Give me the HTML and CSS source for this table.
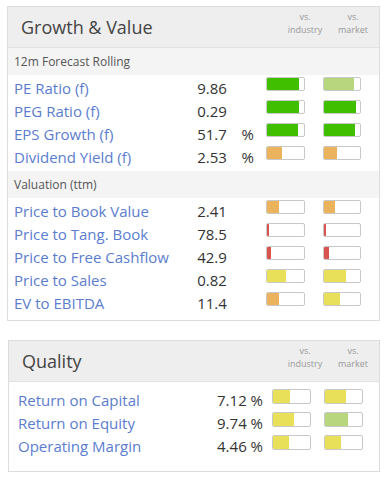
FILE: index.html
```html
<!DOCTYPE html>
<html>
<head>
<meta charset="utf-8">
<link rel="stylesheet" href="styles.css">
</head>
<body>
<div class="panel gv">
  <div class="phead">
    <div class="ptitle">Growth &amp; Value</div>
    <div class="vs">vs.<br>industry</div>
    <div class="vs">vs.<br>market</div>
  </div>
  <div class="sub">12m Forecast Rolling</div>
  <div class="rows">
    <div class="row"><span class="lbl">PE Ratio (f)</span><span class="val">9.86</span><span class="pct"></span><span class="bar"><i class="g" style="width:32px"></i></span><span class="bar"><i class="lg" style="width:30px"></i></span></div>
    <div class="row"><span class="lbl">PEG Ratio (f)</span><span class="val">0.29</span><span class="pct"></span><span class="bar"><i class="g" style="width:32px"></i></span><span class="bar"><i class="g" style="width:32px"></i></span></div>
    <div class="row"><span class="lbl">EPS Growth (f)</span><span class="val">51.7</span><span class="pct">%</span><span class="bar"><i class="g" style="width:31px"></i></span><span class="bar"><i class="g" style="width:31px"></i></span></div>
    <div class="row"><span class="lbl">Dividend Yield (f)</span><span class="val">2.53</span><span class="pct">%</span><span class="bar"><i class="o" style="width:15px"></i></span><span class="bar"><i class="o" style="width:13px"></i></span></div>
  </div>
  <div class="sub">Valuation (ttm)</div>
  <div class="rows last">
    <div class="row"><span class="lbl">Price to Book Value</span><span class="val">2.41</span><span class="pct"></span><span class="bar"><i class="o" style="width:12px"></i></span><span class="bar"><i class="o" style="width:11px"></i></span></div>
    <div class="row"><span class="lbl">Price to Tang. Book</span><span class="val">78.5</span><span class="pct"></span><span class="bar"><i class="r" style="width:2px"></i></span><span class="bar"><i class="r" style="width:2px"></i></span></div>
    <div class="row"><span class="lbl">Price to Free Cashflow</span><span class="val">42.9</span><span class="pct"></span><span class="bar"><i class="r" style="width:4px"></i></span><span class="bar"><i class="r" style="width:5px"></i></span></div>
    <div class="row"><span class="lbl">Price to Sales</span><span class="val">0.82</span><span class="pct"></span><span class="bar"><i class="y" style="width:19px"></i></span><span class="bar"><i class="y" style="width:22px"></i></span></div>
    <div class="row"><span class="lbl">EV to EBITDA</span><span class="val">11.4</span><span class="pct"></span><span class="bar"><i class="o" style="width:12px"></i></span><span class="bar"><i class="y" style="width:16px"></i></span></div>
  </div>
</div>

<div class="panel q">
  <div class="phead">
    <div class="ptitle">Quality</div>
    <div class="vs">vs.<br>industry</div>
    <div class="vs">vs.<br>market</div>
  </div>
  <div class="qrows">
    <div class="qrow"><span class="lbl">Return on Capital</span><span class="qval">7.12 %</span><span class="bar"><i class="y" style="width:17px"></i></span><span class="bar"><i class="y" style="width:21px"></i></span></div>
    <div class="qrow"><span class="lbl">Return on Equity</span><span class="qval">9.74 %</span><span class="bar"><i class="y" style="width:21px"></i></span><span class="bar"><i class="lg" style="width:23px"></i></span></div>
    <div class="qrow"><span class="lbl">Operating Margin</span><span class="qval">4.46 %</span><span class="bar"><i class="y" style="width:16px"></i></span><span class="bar"><i class="y" style="width:16px"></i></span></div>
  </div>
</div>
</body>
</html>
```

FILE: styles.css
```css
html, body {
  margin: 0;
  padding: 0;
  background: #fff;
}
body {
  padding: 6px 0 0 7px;
  font-family: "Open Sans", "DejaVu Sans", sans-serif;
  color: #333;
}
.panel {
  width: 371px;
  border: 1px solid #dddddd;
  background: #fff;
}
.panel.q {
  margin-top: 19px;
  margin-left: 1px;
  width: 370px;
}
.phead {
  display: flex;
  align-items: center;
  height: 40px;
  background: #eeeeee;
  border-bottom: 1px solid #e2e2e2;
  padding-right: 3px;
}
.ptitle {
  flex: 1;
  font-size: 18px;
  color: #444;
  padding-left: 13px;
  line-height: 24px;
}
.q .ptitle {
  padding-left: 13px;
}
.vs {
  align-self: flex-start;
  width: 46px;
  margin-left: 2px;
  margin-top: 3px;
  font-size: 9px;
  line-height: 13px;
  color: #999;
  text-align: center;
}
.sub {
  background: #f4f4f4;
  height: 27px;
  line-height: 27px;
  font-size: 12px;
  color: #555;
  padding-left: 6px;
}
.rows {
  padding: 2px 0 2px;
}
.rows.last {
  padding-bottom: 5px;
}
.row {
  display: flex;
  align-items: flex-start;
  height: 23px;
}
.lbl {
  font-size: 15px;
  line-height: 23px;
  color: #5a7dcf;
}
.row .lbl {
  width: 186px;
  padding-left: 6px;
}
.val {
  width: 45px;
  font-size: 15px;
  line-height: 23px;
  color: #333;
}
.pct {
  width: 25px;
  font-size: 15px;
  line-height: 23px;
  color: #333;
}
.bar {
  display: block;
  box-sizing: border-box;
  width: 39px;
  height: 14px;
  margin-top: 0px;
  border: 1px solid #c8c8c8;
  border-radius: 2px;
  background: #fff;
  margin-right: 18px;
  overflow: hidden;
}
.bar i {
  display: block;
  height: 100%;
}
.g { background: #3fbf00; }
.lg { background: #b7d67e; }
.o { background: #ebb45c; }
.r { background: #d9534f; }
.y { background: #e9e05a; }

.qrows {
  padding: 7px 0 13px;
}
.qrow {
  display: flex;
  align-items: flex-start;
  height: 23px;
}
.qrow .lbl {
  width: 160px;
  padding-left: 9px;
}
.qval {
  width: 85px;
  text-align: right;
  font-size: 15px;
  line-height: 23px;
  color: #333;
  margin-right: 9px;
}
.qrow .bar {
  height: 15px;
  margin-right: 13px;
}
```
